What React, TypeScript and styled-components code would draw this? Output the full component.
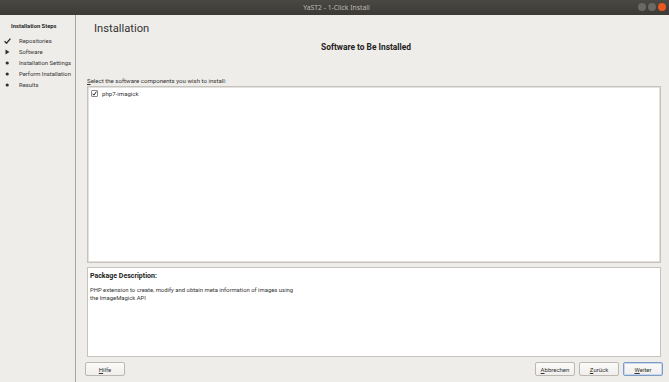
import styled, { createGlobalStyle } from "styled-components";

const GlobalStyle = createGlobalStyle`
  html, body {
    margin: 0;
    padding: 0;
    background: #efedea;
  }
  body {
    font-family: Roboto, "Noto Sans", "DejaVu Sans", sans-serif;
    color: #2e2e2e;
  }
`;

type StepState = "done" | "current" | "todo";

const steps: { label: string; state: StepState }[] = [
  { label: "Repositories", state: "done" },
  { label: "Software", state: "current" },
  { label: "Installation Settings", state: "todo" },
  { label: "Perform Installation", state: "todo" },
  { label: "Results", state: "todo" },
];

const App = () => {
  return (
    <Window>
      <GlobalStyle />
      <TitleBar>
        <TitleText>YaST2 - 1-Click Install</TitleText>
        <WinControls>
          <WinDot />
          <WinDot />
          <WinDot $close />
        </WinControls>
      </TitleBar>
      <Body>
        <Sidebar>
          <SideTitle>Installation Steps</SideTitle>
          <StepList>
            {steps.map((s) => (
              <Step key={s.label}>
                <StepMark>
                  {s.state === "done" ? (
                    <svg width="7" height="6" viewBox="0 0 7 6">
                      <path d="M0.6 3.3 L2.5 5.2 L6.4 0.6" stroke="#2e2e2e" strokeWidth="1.4" fill="none" />
                    </svg>
                  ) : s.state === "current" ? (
                    <svg width="7" height="6" viewBox="0 0 7 6">
                      <path d="M1.5 0.6 L5.5 3 L1.5 5.4 Z" fill="#2e2e2e" />
                    </svg>
                  ) : (
                    <svg width="7" height="4" viewBox="0 0 7 4">
                      <circle cx="3.2" cy="2" r="1.6" fill="#2e2e2e" />
                    </svg>
                  )}
                </StepMark>
                {s.label}
              </Step>
            ))}
          </StepList>
        </Sidebar>
        <Main>
          <Heading>Installation</Heading>
          <SubHeading>Software to Be Installed</SubHeading>
          <FieldLabel>
            <u>S</u>elect the software components you wish to install:
          </FieldLabel>
          <ListBox>
            <ListRow>
              <CheckBox>
                <svg width="5" height="5" viewBox="0 0 5 5">
                  <path d="M0.6 2.7 L1.9 4.2 L4.4 0.6" stroke="#222" strokeWidth="1" fill="none" />
                </svg>
              </CheckBox>
              php7-imagick
            </ListRow>
          </ListBox>
          <DescBox>
            <DescTitle>Package Description:</DescTitle>
            <DescText>
              PHP extension to create, modify and obtain meta information of images using
              <br />
              the ImageMagick API
            </DescText>
          </DescBox>
          <ButtonRow>
            <Button>
              <u>H</u>ilfe
            </Button>
            <Spacer />
            <Button>
              <u>A</u>bbrechen
            </Button>
            <Button>
              <u>Z</u>urück
            </Button>
            <Button $primary>
              <u>W</u>eiter
            </Button>
          </ButtonRow>
        </Main>
      </Body>
    </Window>
  );
};
export default App;

const Window = styled.div`
  width: 669px;
  height: 382px;
  display: flex;
  flex-direction: column;
  background: #efedea;
  overflow: hidden;
`;

const TitleBar = styled.div`
  height: 15px;
  flex: none;
  position: relative;
  display: flex;
  align-items: center;
  justify-content: center;
  background: linear-gradient(#4a4843, #3b3a36);
`;

const TitleText = styled.div`
  font-family: "Noto Sans", sans-serif;
  font-size: 6.8px;
  color: #bdbab3;
  padding-left: 4px;
`;

const WinControls = styled.div`
  position: absolute;
  right: 3px;
  top: 3px;
  display: flex;
  gap: 2px;
`;

const WinDot = styled.div<{ $close?: boolean }>`
  width: 8px;
  height: 8px;
  border-radius: 50%;
  background: ${(p) => (p.$close ? "#e8571f" : "#6a6964")};
`;

const Body = styled.div`
  flex: 1;
  display: flex;
  min-height: 0;
`;

const Sidebar = styled.div`
  width: 76px;
  flex: none;
  border-right: 1px solid #a9a6a1;
  padding: 7px 0 0 4px;
  box-sizing: border-box;
  background: #efedea;
`;

const SideTitle = styled.div`
  font-size: 5.8px;
  font-weight: 700;
  line-height: 9px;
  padding-left: 7px;
  color: #2a2a2a;
`;

const StepList = styled.div`
  margin-top: 4px;
  display: flex;
  flex-direction: column;
`;

const Step = styled.div`
  display: flex;
  align-items: center;
  height: 11px;
  font-size: 5.9px;
  color: #333;
  white-space: nowrap;
`;

const StepMark = styled.span`
  width: 7px;
  margin-right: 8px;
  display: inline-flex;
`;

const Main = styled.div`
  flex: 1;
  min-width: 0;
  display: flex;
  flex-direction: column;
  padding: 7px 8px 0 11px;
`;

const Heading = styled.div`
  font-size: 11.2px;
  line-height: 14px;
  height: 14px;
  margin-left: 7px;
  color: #333;
`;

const SubHeading = styled.div`
  margin-top: 5px;
  font-size: 8.4px;
  line-height: 12px;
  height: 12px;
  font-weight: 700;
  text-align: center;
  color: #222;
  padding-right: 16px;
`;

const FieldLabel = styled.div`
  margin-top: 23px;
  font-size: 6.1px;
  line-height: 9px;
  height: 9px;
  color: #333;
`;

const ListBox = styled.div`
  margin-top: 1px;
  height: 177px;
  box-sizing: border-box;
  background: #fff;
  border: 1px solid #c6c3be;
  box-shadow: inset 0 0 0 1px #e3e1dd;
  padding: 2px 3px;
`;

const ListRow = styled.div`
  display: flex;
  align-items: center;
  height: 9px;
  font-size: 6.1px;
  color: #333;
  gap: 4px;
`;

const CheckBox = styled.span`
  width: 7px;
  height: 7px;
  box-sizing: border-box;
  border: 1px solid #8d8a85;
  border-radius: 1px;
  background: #fff;
  display: inline-flex;
  align-items: center;
  justify-content: center;
`;

const DescBox = styled.div`
  margin-top: 4px;
  height: 90px;
  box-sizing: border-box;
  background: #fff;
  border: 1px solid #c6c3be;
  padding: 3px 2px;
`;

const DescTitle = styled.div`
  font-size: 7px;
  font-weight: 700;
  line-height: 10px;
  color: #222;
`;

const DescText = styled.div`
  margin-top: 6px;
  font-size: 5.9px;
  line-height: 7.5px;
  color: #333;
`;

const ButtonRow = styled.div`
  margin-top: 5px;
  height: 14px;
  display: flex;
  gap: 4px;
  margin-left: -2px;
  margin-right: -2px;
`;

const Spacer = styled.div`
  flex: 1;
`;

const Button = styled.div<{ $primary?: boolean }>`
  width: 40px;
  height: 14px;
  box-sizing: border-box;
  border: 1px solid ${(p) => (p.$primary ? "#7e9cc8" : "#bcb8b1")};
  border-radius: 2px;
  background: linear-gradient(#fbfbfa, #efeeec);
  display: flex;
  align-items: center;
  justify-content: center;
  font-size: 6px;
  color: #333;
  box-shadow: ${(p) => (p.$primary ? "inset 0 0 0 1px #c9d7ec" : "none")};
`;
